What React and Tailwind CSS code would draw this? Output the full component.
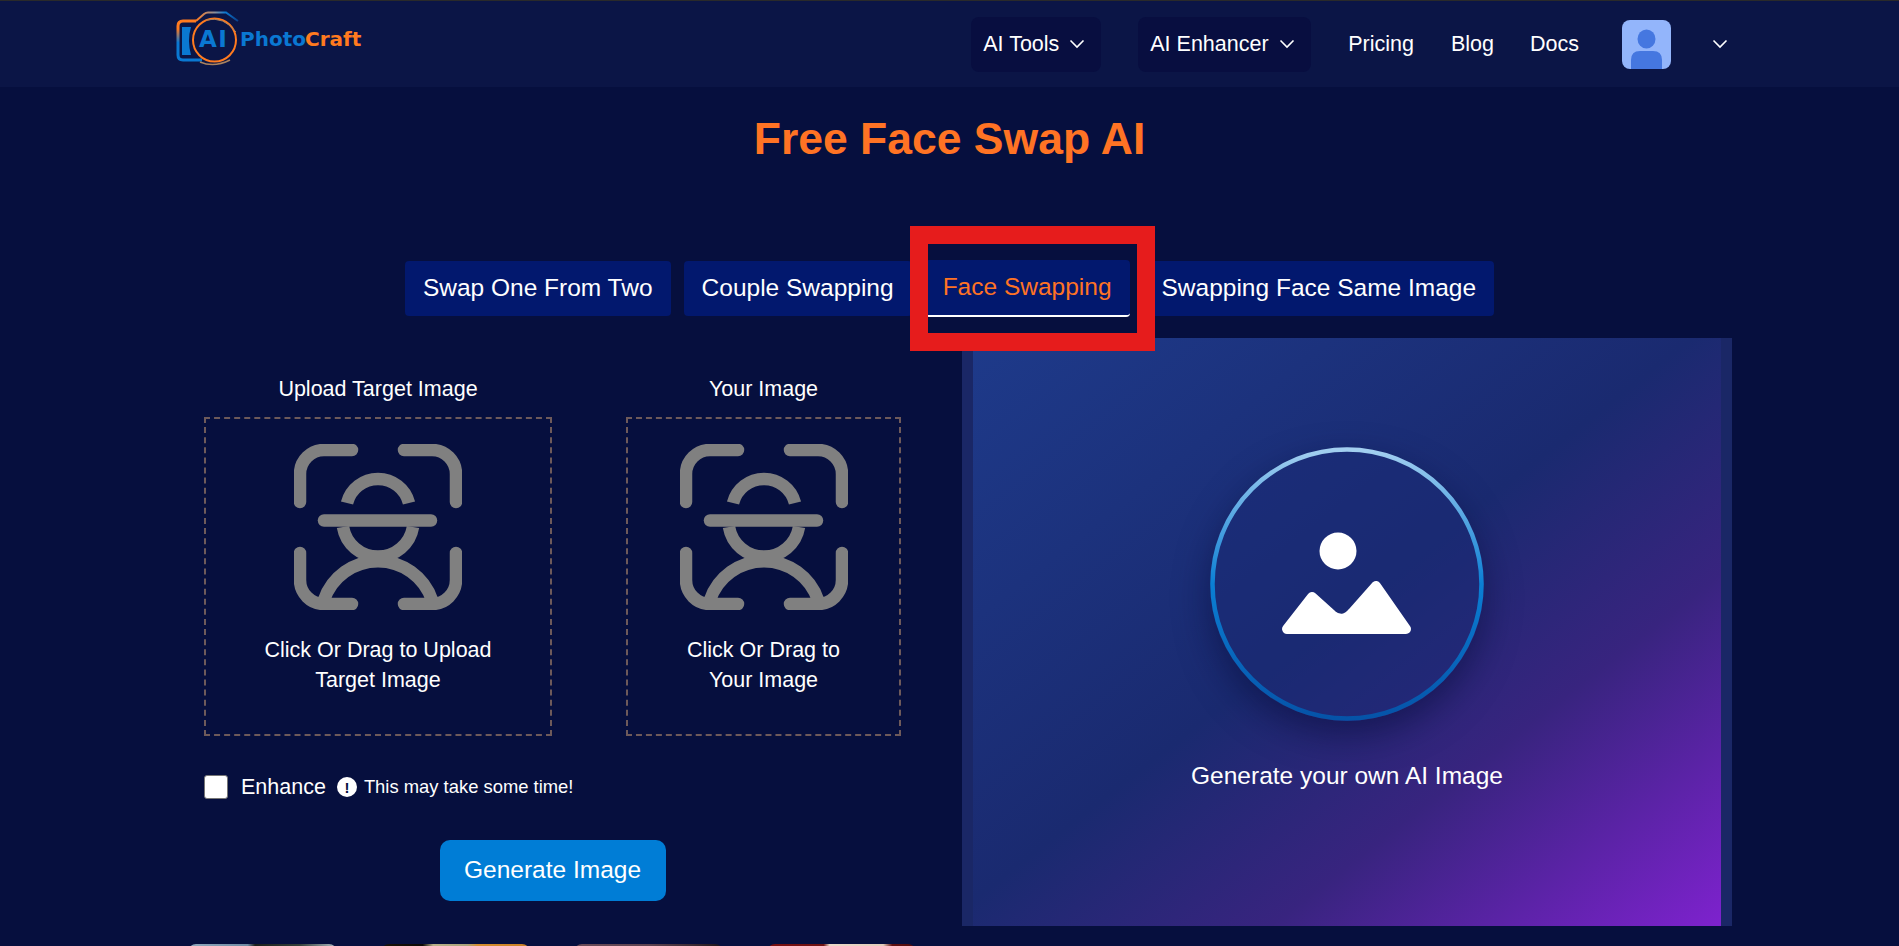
import { Fragment } from 'react';

const tabs = ['Swap One From Two', 'Couple Swapping', 'Face Swapping', 'Swapping Face Same Image'];

const uploads = [
  { label: 'Upload Target Image', hint: ['Click Or Drag to Upload', 'Target Image'], width: 'w-[348px]' },
  { label: 'Your Image', hint: ['Click Or Drag to', 'Your Image'], width: 'w-[275px]' },
];

const thumbs = [
  'bg-[linear-gradient(90deg,#8fa9bd_0%,#6f8ba3_40%,#1a1f1c_45%,#33403a_75%,#aebcc4_100%)]',
  'bg-[linear-gradient(90deg,#1a1408_0%,#0c0a06_28%,#b8b189_35%,#a8a27a_58%,#d48d2e_65%,#c77f24_100%)]',
  'bg-[linear-gradient(90deg,#6b4c58_0%,#5d4350_50%,#3a2a33_80%,#1c1418_100%)]',
  'bg-[linear-gradient(90deg,#7a0f10_0%,#6e1212_38%,#ead9c8_42%,#e2cdbb_78%,#5f0f10_84%,#4e0d0e_100%)]',
];

function Chevron() {
  return (
    <svg viewBox="0 0 14 8" className="w-[14px] h-[8px] overflow-visible" fill="none" stroke="white" strokeWidth="1.6">
      <path d="M0.5 0.5l6.5 6.5 6.5-6.5" />
    </svg>
  );
}

function Logo() {
  return (
    <svg viewBox="0 0 200 60" className="w-[200px] h-[60px] mt-[9px] self-start font-['DejaVu_Sans',sans-serif]">
      <defs>
        <linearGradient id="bodyGrad" x1="0" y1="0" x2="0" y2="1">
          <stop offset="0.2" stopColor="#ff7a1f" />
          <stop offset="0.55" stopColor="#0a78d2" />
        </linearGradient>
        <linearGradient id="bumpGrad" x1="0" y1="0" x2="1" y2="0">
          <stop offset="0" stopColor="#ff7a1f" />
          <stop offset="0.45" stopColor="#8a8f9c" />
          <stop offset="0.7" stopColor="#0a78d2" />
          <stop offset="1" stopColor="#0a3f8a" />
        </linearGradient>
      </defs>
      <path d="M26 11H13Q8 11 8 16V45Q8 50 13 50H32" fill="none" stroke="url(#bodyGrad)" strokeWidth="3" />
      <path d="M26 11L34 4Q36 2.5 38 2.5H56L68 11" fill="none" stroke="url(#bumpGrad)" strokeWidth="2" />
      <path d="M12 17H21Q17 30 21 45H12Z" fill="#0a78d2" />
      <circle cx="44.5" cy="30" r="21.5" fill="#0b1546" stroke="#ff7a1f" strokeWidth="2" />
      <path d="M30 52Q44 58 60 50" fill="none" stroke="#a9825f" strokeWidth="1.6" />
      <path d="M36 10Q54 6 66 22" fill="none" stroke="#a9825f" strokeWidth="1" />
      <text x="29" y="37" fontSize="23" fontWeight="700" fill="#0a78d2" letterSpacing="1.5">AI</text>
      <text x="70" y="36" fontSize="20" fontWeight="700" fill="#0a78d2">Photo</text>
      <text x="135" y="36" fontSize="20" fontWeight="700" fill="#ff7a1f">Craft</text>
    </svg>
  );
}

function FaceScan() {
  return (
    <svg viewBox="0 0 168 166" className="w-[168px] h-[166px] blur-[0.5px]" fill="none" stroke="#808080" strokeWidth="12.5" strokeLinecap="round">
      <path d="M6 58V30A24 24 0 0 1 30 6H58" />
      <path d="M110 6H138A24 24 0 0 1 162 30V58" />
      <path d="M6 109V136A24 24 0 0 0 30 160H58" />
      <path d="M110 160H138A24 24 0 0 0 162 136V109" />
      <path d="M53 59A32 32 0 0 1 115 59" strokeLinecap="butt" />
      <path d="M30 76.500H137" />
      <path d="M49 83A35.5 35.5 0 0 0 119 83" strokeLinecap="butt" />
      <path d="M30 156A57 57 0 0 1 138 156" strokeLinecap="butt" />
    </svg>
  );
}

function Placeholder() {
  return (
    <div className="w-[274px] h-[274px] rounded-full shadow-[0_14px_34px_rgba(10,12,60,0.55)]">
      <svg viewBox="0 0 274 274" className="w-[274px] h-[274px]">
        <defs>
          <linearGradient id="ringGrad" x1="0" y1="0" x2="0" y2="1">
            <stop offset="0" stopColor="#a3cff0" />
            <stop offset="0.5" stopColor="#0b7fd4" />
            <stop offset="1" stopColor="#0553a8" />
          </linearGradient>
        </defs>
        <circle cx="137" cy="137" r="134.5" fill="#1a2a75" fillOpacity="0.5" stroke="url(#ringGrad)" strokeWidth="4.5" />
        <circle cx="128" cy="104" r="18.5" fill="white" />
        <path
          d="M77 182H196L166 139L143 165Q133 177 122 168L102 150Z"
          fill="white"
          stroke="white"
          strokeWidth="10"
          strokeLinejoin="round"
        />
      </svg>
    </div>
  );
}

export default function App() {
  return (
    <div className="h-screen overflow-hidden bg-[#060f3e] text-white font-['Liberation_Sans',Arial,sans-serif]">
      <nav className="h-[87px] bg-[#0b1546] border-t border-[#2a2a2a] flex justify-between pl-[170px] pr-[172px]">
        <Logo />
        <div className="flex items-center text-[21.5px]">
          <button className="h-[55px] w-[130px] rounded-lg bg-[#080e40] flex items-center gap-[11px] pl-3">
            AI Tools <Chevron />
          </button>
          <button className="h-[55px] w-[173px] ml-[37px] rounded-lg bg-[#080e40] flex items-center gap-[11px] pl-3">
            AI Enhancer <Chevron />
          </button>
          <a className="ml-[37px]">Pricing</a>
          <a className="ml-[37px]">Blog</a>
          <a className="ml-[36px]">Docs</a>
          <div className="ml-[43px] w-[49px] h-[49px] rounded-lg overflow-hidden bg-[#93b5fb]">
            <svg viewBox="0 0 49 49" className="w-[49px] h-[49px]" fill="#4577e0">
              <ellipse cx="24.5" cy="19" rx="9" ry="9.5" />
              <path d="M9 49V40Q9 31 18 31H31Q40 31 40 40V49Z" />
            </svg>
          </div>
          <div className="ml-[42px]">
            <Chevron />
          </div>
        </div>
      </nav>

      <h1 className="pt-[26px] text-center text-[44.5px] leading-[52px] font-bold text-[#ff7324]">Free Face Swap AI</h1>

      <div className="mt-[95px] flex items-center justify-center text-[24.5px]">
        {tabs.map((tab, i) => (
          <Fragment key={tab}>
            {tab === 'Face Swapping' ? (
              <button className="relative h-[57px] px-[18px] ml-[13px] rounded-sm bg-[#02186e] text-[#ff7324] border-b-2 border-white">
                {tab}
                <span className="absolute -left-[15px] -top-[34px] w-[245px] h-[125px] border-[18px] border-[#e61c1c]" />
              </button>
            ) : (
              <button className={`h-[55px] px-[18px] rounded-sm bg-[#02186e] ${i === 0 ? '' : i === 1 ? 'ml-[13px]' : 'ml-[14px]'}`}>
                {tab}
              </button>
            )}
          </Fragment>
        ))}
      </div>

      <div className="mt-[21px] ml-[167px] flex">
        <div className="w-[795px] pl-[37px] pt-[36px]">
          <div className="w-[697px]">
            <div className="flex gap-[74px]">
              {uploads.map(u => (
                <div key={u.label} className={u.width}>
                  <div className="text-center text-[21.5px] leading-[30px] mb-[13px]">{u.label}</div>
                  <div className="h-[319px] border-2 border-dashed border-[#6e5a5a] pt-[25px] flex flex-col items-center">
                    <FaceScan />
                    <div className="mt-[25px] text-center text-[21.5px] leading-[30px]">
                      {u.hint[0]}
                      <br />
                      {u.hint[1]}
                    </div>
                  </div>
                </div>
              ))}
            </div>
            <div className="mt-[39px] flex items-center h-[24px]">
              <span className="w-[24px] h-[24px] rounded-[3px] bg-white border border-[#767676]" />
              <span className="ml-[13px] text-[21.5px]">Enhance</span>
              <span className="ml-[11px] w-[20px] h-[20px] rounded-full bg-white flex items-center justify-center text-[#060f3e] text-[15px] font-bold leading-none">!</span>
              <span className="ml-[7px] text-[18.4px]">This may take some time!</span>
            </div>
            <div className="mt-[41px] flex justify-center">
              <button className="w-[226px] h-[61px] rounded-[10px] bg-[#007dd6] text-[24.5px]">Generate Image</button>
            </div>
          </div>
        </div>

        <div className="w-[770px] h-[588px] bg-[#1a2766] px-[11px]">
          <div className="h-full pt-[109px] flex flex-col items-center bg-[linear-gradient(142deg,#1e3a8a_0%,#1a2a70_48%,#38247f_70%,#7e22ce_100%)]">
            <Placeholder />
            <div className="mt-[40px] text-[24.5px] leading-[30px]">Generate your own AI Image</div>
          </div>
        </div>
      </div>

      <div className="mt-[18px] ml-[188px] flex gap-[44px]">
        {thumbs.map(t => (
          <div key={t} className={`w-[149px] h-[200px] rounded-lg ${t}`} />
        ))}
      </div>
    </div>
  );
}
